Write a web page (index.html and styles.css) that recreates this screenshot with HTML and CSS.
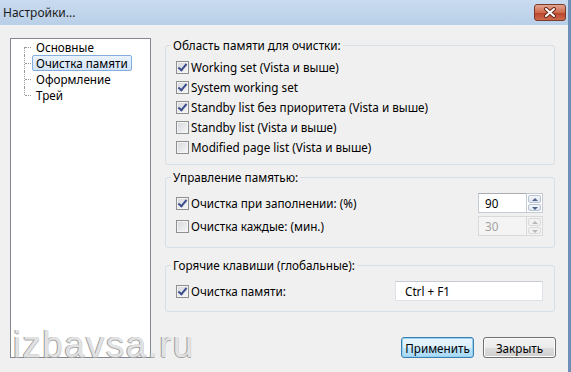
FILE: index.html
```html
<!DOCTYPE html>
<html lang="ru">

<head>
    <meta charset="UTF-8">
    <title>Настройки...</title>
    <link rel="stylesheet" href="styles.css">
</head>

<body>
    <div class="window">
        <div class="title-bar">
            <span class="title">Настройки...</span>
            <button class="close-btn" title="Закрыть">
                <svg width="14" height="11" viewBox="0 0 14 11">
                    <path d="M3 2 L11 9 M11 2 L3 9" stroke="#6b2a1c" stroke-width="4" stroke-linecap="round" />
                    <path d="M3 2 L11 9 M11 2 L3 9" stroke="#fff" stroke-width="2" stroke-linecap="round" />
                </svg>
            </button>
        </div>

        <div class="content">
            <!-- Settings sections -->
            <ul class="tree">
                <li><span>Основные</span></li>
                <li class="selected"><span>Очистка памяти</span></li>
                <li><span>Оформление</span></li>
                <li><span>Трей</span></li>
            </ul>

            <div class="panel">
                <fieldset class="group group-areas">
                    <legend>Область памяти для очистки:</legend>
                    <label class="check-row"><span class="checkbox checked"></span>Working set (Vista и выше)</label>
                    <label class="check-row"><span class="checkbox checked"></span>System working set</label>
                    <label class="check-row"><span class="checkbox checked"></span>Standby list без приоритета (Vista и выше)</label>
                    <label class="check-row"><span class="checkbox"></span>Standby list (Vista и выше)</label>
                    <label class="check-row"><span class="checkbox"></span>Modified page list (Vista и выше)</label>
                </fieldset>

                <fieldset class="group group-memory">
                    <legend>Управление памятью:</legend>
                    <div class="option-row">
                        <label class="check-row"><span class="checkbox checked"></span>Очистка при заполнении: (%)</label>
                        <div class="spin">
                            <div class="spin-input">90</div>
                            <div class="spin-btns">
                                <span class="spin-up"></span>
                                <span class="spin-down"></span>
                            </div>
                        </div>
                    </div>
                    <div class="option-row">
                        <label class="check-row"><span class="checkbox"></span>Очистка каждые: (мин.)</label>
                        <div class="spin disabled">
                            <div class="spin-input">30</div>
                            <div class="spin-btns">
                                <span class="spin-up"></span>
                                <span class="spin-down"></span>
                            </div>
                        </div>
                    </div>
                </fieldset>

                <fieldset class="group group-hotkeys">
                    <legend>Горячие клавиши (глобальные):</legend>
                    <div class="option-row">
                        <label class="check-row"><span class="checkbox checked"></span>Очистка памяти:</label>
                        <div class="hotkey-input">Ctrl + F1</div>
                    </div>
                </fieldset>

                <div class="buttons">
                    <button class="btn btn-default">Применить</button>
                    <button class="btn">Закрыть</button>
                </div>
            </div>

            <div class="watermark">izbavsa.ru</div>
        </div>
    </div>
</body>

</html>
```

FILE: styles.css
```css
body {
    margin: 0;
    font-family: "Noto Sans", sans-serif;
    font-size: 11.7px;
    color: #000;
    background-color: #f0f0f0;
}

.window {
    width: 568px;
    height: 372px;
    border-right: 3px solid #6f8fb8;
    display: flex;
    flex-direction: column;
    background-color: #f0f0f0;
}

/* Title bar */
.title-bar {
    height: 25px;
    box-sizing: border-box;
    padding: 0 2px 0 3px;
    display: flex;
    align-items: center;
    justify-content: space-between;
    background: linear-gradient(#c9dbef, #b9cfe8);
}

.title {
    font-size: 12px;
    color: #1b1b1b;
}

.close-btn {
    width: 32px;
    height: 17px;
    padding: 0;
    border: 1px solid #7a3a2a;
    border-radius: 3px;
    background: linear-gradient(#e3a592, #cf6a4c 50%, #b9442a 51%, #cc6a4d);
    display: flex;
    align-items: center;
    justify-content: center;
}

/* Main area */
.content {
    position: relative;
    flex: 1;
    display: flex;
    gap: 14px;
    padding: 13px 13px 0 10px;
}

/* Tree of sections */
.tree {
    width: 141px;
    height: 320px;
    box-sizing: border-box;
    margin: 0;
    padding: 0 0 0 21px;
    list-style: none;
    background-color: #fff;
    border: 1px solid #828790;
}

.tree li {
    position: relative;
    height: 16px;
}

.tree li::before {
    content: "";
    position: absolute;
    left: -8px;
    top: 0;
    height: 100%;
    border-left: 1px dotted #9a9a9a;
}

.tree li:first-child::before {
    top: 8px;
    height: 8px;
}

.tree li:last-child::before {
    height: 8px;
}

.tree li::after {
    content: "";
    position: absolute;
    left: -7px;
    top: 8px;
    width: 6px;
    border-top: 1px dotted #9a9a9a;
}

.tree span {
    display: inline-block;
    height: 14px;
    line-height: 14px;
    padding: 0 3px;
    border: 1px solid transparent;
    border-radius: 2px;
}

.tree .selected span {
    border-color: #84acdd;
    background: linear-gradient(#eaf3fd, #d3e5fa);
}

/* Right panel */
.panel {
    width: 390px;
    display: flex;
    flex-direction: column;
}

.group {
    margin: 0;
    min-width: 0;
    border: 1px solid #d5dfe5;
    border-radius: 3px;
}

.group legend {
    padding: 0 2px;
    margin-left: -5px;
    line-height: 15px;
}

.group-areas {
    padding: 4px 11px 7px 10px;
}

.group-memory {
    margin-top: 5px;
    padding: 8px 11px 11px 10px;
    display: flex;
    flex-direction: column;
    gap: 3px;
}

.group-hotkeys {
    margin-top: 10px;
    padding: 8px 11px 10px 10px;
}

.check-row {
    height: 20px;
    display: flex;
    align-items: center;
    gap: 2px;
}

.checkbox {
    width: 11px;
    height: 11px;
    border: 1px solid #8e8f8f;
    background: linear-gradient(135deg, #d4d7dc, #f7f7f7);
    box-shadow: inset 0 0 0 1px #f4f4f4;
    position: relative;
    flex-shrink: 0;
}

.checkbox.checked::after {
    content: "";
    position: absolute;
    left: 3px;
    top: 0px;
    width: 3px;
    height: 7px;
    border: solid #3d4f8c;
    border-width: 0 2px 2px 0;
    transform: rotate(40deg);
}

.option-row {
    height: 20px;
    display: flex;
    align-items: center;
    justify-content: space-between;
}

/* Numeric up-down */
.spin {
    display: flex;
    height: 20px;
}

.spin-input {
    width: 49px;
    box-sizing: border-box;
    padding-left: 6px;
    line-height: 18px;
    background-color: #fff;
    border: 1px solid #c5cbd3;
    border-top-color: #abadb3;
}

.spin-btns {
    width: 16px;
    display: flex;
    flex-direction: column;
    background-color: #fff;
    border: 1px solid #c5cbd3;
    border-left: none;
    box-sizing: border-box;
    padding: 1px;
    gap: 1px;
}

.spin-btns span {
    flex: 1;
    position: relative;
    border: 1px solid #b6c3d4;
    border-radius: 2px;
    background: linear-gradient(#f5f7fa, #dfe5ee);
}

.spin-btns span::after {
    content: "";
    position: absolute;
    left: 3px;
    border-left: 3px solid transparent;
    border-right: 3px solid transparent;
}

.spin-up::after {
    top: 2px;
    border-bottom: 3px solid #4f6489;
}

.spin-down::after {
    top: 2px;
    border-top: 3px solid #4f6489;
}

.spin.disabled .spin-input {
    background-color: #f4f4f4;
    color: #a3a3a3;
    border-color: #d9d9d9;
}

.spin.disabled .spin-btns {
    background-color: #f4f4f4;
    border-color: #d9d9d9;
}

.spin.disabled .spin-btns span {
    border-color: #dadada;
    background: #f1f1f1;
}

.spin.disabled .spin-up::after {
    border-bottom-color: #b8b8b8;
}

.spin.disabled .spin-down::after {
    border-top-color: #b8b8b8;
}

.hotkey-input {
    width: 148px;
    height: 20px;
    box-sizing: border-box;
    padding-left: 9px;
    line-height: 18px;
    background-color: #fff;
    border: 1px solid #dde2e8;
    border-top-color: #c8ccd2;
}

/* Dialog buttons */
.buttons {
    margin-top: 25px;
    margin-right: -1px;
    display: flex;
    justify-content: flex-end;
    gap: 9px;
}

.btn {
    width: 73px;
    height: 21px;
    padding: 0;
    font-family: inherit;
    font-size: 11.7px;
    color: #000;
    border: 1px solid #707070;
    border-radius: 3px;
    background: linear-gradient(#f2f2f2, #ebebeb 50%, #dddddd 51%, #cfcfcf);
    box-shadow: inset 0 0 0 1px #fcfcfc;
}

.btn-default {
    border-color: #3c7fb1;
    background: linear-gradient(#eaf6fd, #d9f0fc 50%, #bee6fd 51%, #a7d9f5);
    box-shadow: inset 0 0 0 1px #98d1ef;
}

/* Site watermark over the dialog */
.watermark {
    position: absolute;
    left: 13px;
    top: 301px;
    font-family: "Liberation Sans", sans-serif;
    font-size: 37px;
    line-height: 37px;
    letter-spacing: 1.3px;
    color: #e2e2e2;
    text-shadow: -1px 0 #999, 0 1px #aaa;
}
```
